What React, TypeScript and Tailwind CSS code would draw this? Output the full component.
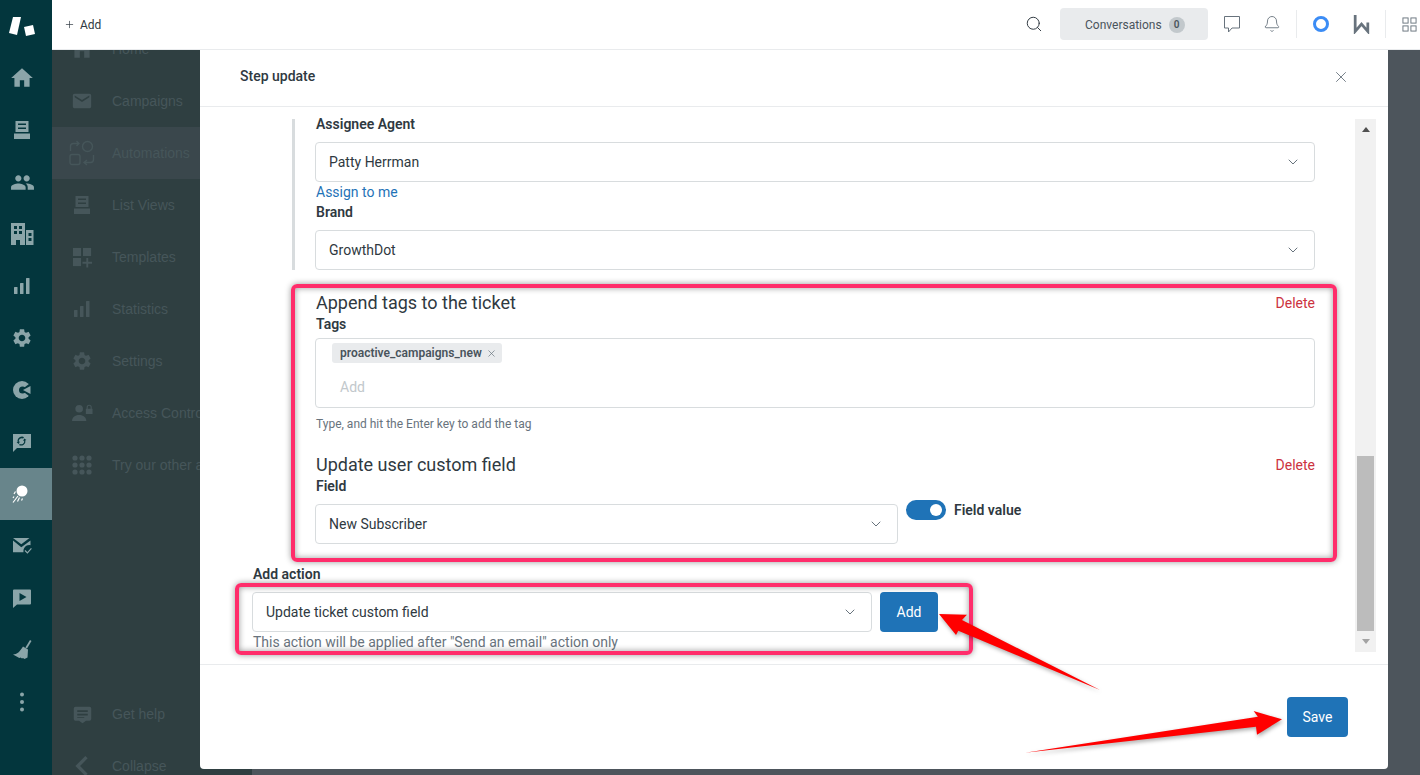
import { ChevronDown, Plus, Search, X, Bell } from 'lucide-react';
import { ReactNode } from 'react';
import { MdHome, MdPeople, MdSettings, MdEmail, MdChevronLeft } from 'react-icons/md';

const Svg = ({ children, className }: { children: ReactNode; className?: string }) => (
  <svg viewBox="0 0 24 24" fill="currentColor" className={className ?? 'w-6 h-6'}>
    {children}
  </svg>
);

const Logo = () => (
  <svg viewBox="0 0 26 20" fill="white" className="w-[26px] h-[20px]">
    <path d="M4 1 L12 1 L8 19 L0 17 Z" />
    <path d="M15 11 L24 9 L26 18 L17 20 Z" />
  </svg>
);

const InboxIcon = () => (
  <svg viewBox="0 0 16 18" fill="currentColor" className="w-4 h-[18px]">
    <path fillRule="evenodd" d="M1.500 0h13v11h-13z M4 2.500v1.500h8V2.500z M4 6.500V8h8V6.500z" />
    <path d="M0 12.500h16V18H0z" />
  </svg>
);

const BuildingIcon = () => (
  <Svg>
    <path
      fillRule="evenodd"
      d="M1 1h14v22H10v-5H6v5H1z M4 4v3h3V4z M9 4v3h3V4z M4 9v3h3V9z M9 9v3h3V9z M16 8h7.500v15H16z M18.500 11v3h3v-3z M18.500 16v3h3v-3z"
    />
  </Svg>
);

const BarsIcon = () => (
  <svg viewBox="0 0 16 16" fill="currentColor" className="w-4 h-4">
    <rect x="0" y="9" width="3.500" height="7" rx="0.5" />
    <rect x="6" y="5" width="3.500" height="11" rx="0.5" />
    <rect x="12" y="0" width="3.500" height="16" rx="0.5" />
  </svg>
);

const GaugeIcon = () => (
  <svg viewBox="0 0 18 18" fill="currentColor" className="h-[18px] w-[18px]">
    <circle cx="9" cy="9" r="9" />
    <circle cx="9.500" cy="9" r="3.500" fill="#03363d" />
    <polygon points="8,9 18.500,1 18.500,17" fill="#03363d" />
    <polygon points="10,9 17.500,5 17.500,13" />
  </svg>
);

const ChatSyncIcon = () => (
  <Svg>
    <path
      fillRule="evenodd"
      d="M3 4h18v14H7l-4 4z M12 6.500a4.500 4.500 0 0 0-4.400 5.500l-1 .3 2.200 1.700 1-2.600-1 .3a3 3 0 0 1 4.300-3.200l.9-1.200a4.500 4.500 0 0 0-2-.8z M16.400 10l-2.200-1.600-1 2.500 1-.2a3 3 0 0 1-4.300 3.200l-.9 1.200a4.500 4.500 0 0 0 6.400-4.800z"
    />
  </Svg>
);

const CometIcon = () => (
  <svg viewBox="0 0 24 24" fill="white" stroke="white" className="w-6 h-6">
    <circle cx="12" cy="9" r="5.500" stroke="none" />
    <path d="M5.500 9.500 4 12M8 14 3 20.500M9.500 15.500 7.500 19.500M12.500 16.500 11.500 18.500M4 14.500 3 16" strokeWidth="1.200" fill="none" />
  </svg>
);

const MailCheckIcon = () => (
  <Svg>
    <path d="M3 4h16.500l-8.200 6.200L3 4z" />
    <path d="M3 6.500v11.700h10.500a6 6 0 0 1 7-7V6.500l-9.200 6.700z" />
    <path d="M15 16.500l2.400 2.400 4-4.600" fill="none" stroke="currentColor" strokeWidth="1.200" />
  </Svg>
);

const VideoChatIcon = () => (
  <Svg>
    <path
      fillRule="evenodd"
      d="M4 3.500h16a1 1 0 0 1 1 1v13a1 1 0 0 1-1 1H7L3 22V4.500a1 1 0 0 1 1-1z M9.500 7v8l7-4z"
    />
  </Svg>
);

const BroomIcon = () => (
  <Svg>
    <path d="M20 2l1.500 1-4.500 7.500-1.600-1z" />
    <path d="M13 8.500l5 3-.5 8-3 1.500-1.500-1-1 .6-1.500-1-1.200.5L3 16.500c4 0 7-3 10-8z" />
  </Svg>
);

const DotsIcon = () => (
  <svg viewBox="0 0 24 24" fill="currentColor" className="w-6 h-6">
    <circle cx="12" cy="4.500" r="2" />
    <circle cx="12" cy="12" r="2" />
    <circle cx="12" cy="19.500" r="2" />
  </svg>
);

const AutomationIcon = () => (
  <svg viewBox="0 0 26 26" fill="none" stroke="currentColor" strokeWidth="1.400" className="w-[26px] h-[26px]">
    <circle cx="18.500" cy="6.500" r="5" />
    <rect x="1" y="14.500" width="10" height="10" rx="2" />
    <path d="M1.500 11V6.500a3 3 0 0 1 3-3H10M7.500 1 10 3.500 7.500 6" />
    <path d="M24.500 15v4.500a3 3 0 0 1-3 3H15M18 20l-3 2.500 3 2.500" />
  </svg>
);

const TemplatesIcon = () => (
  <svg viewBox="0 0 22 22" fill="currentColor" className="w-[21px] h-[21px]">
    <rect x="1" y="1" width="8.500" height="8.500" />
    <rect x="11.500" y="1" width="8.500" height="8.500" />
    <rect x="1" y="11.500" width="8.500" height="8.500" />
    <path d="M15 11.500h2v4h4v2h-4v4h-2v-4h-4v-2h4z" />
  </svg>
);

const AccessIcon = () => (
  <svg viewBox="0 0 22 18" fill="currentColor" className="w-[21px] h-[18px]">
    <circle cx="7.500" cy="4.500" r="4" />
    <path d="M0 17.500c0-4 3-6.500 7.500-6.500s7.500 2.500 7.500 6.500z" />
    <path fillRule="evenodd" d="M14.500 4.500h.8V3a2.700 2.700 0 0 1 5.400 0v1.500h.8V10h-7z M16.500 4.500h3V3a1.500 1.500 0 0 0-3 0z" />
  </svg>
);

const AppsIcon = () => (
  <svg viewBox="0 0 20 20" fill="currentColor" className="w-5 h-5">
    {[3, 10, 17].flatMap((cy) =>
      [3, 10, 17].map((cx) => <circle key={`${cx}-${cy}`} cx={cx} cy={cy} r="2.600" />)
    )}
  </svg>
);

const HelpIcon = () => (
  <svg viewBox="0 0 24 24" fill="currentColor" className="h-[21px] w-[21px]">
    <path
      fillRule="evenodd"
      d="M4 3h16a2 2 0 0 1 2 2v12a2 2 0 0 1-2 2h-4l-4 3-4-3H4a2 2 0 0 1-2-2V5a2 2 0 0 1 2-2z M6 7v2h12V7z M6 11v2h12v-2z M6 15v1h8v-1z"
    />
  </svg>
);

const GridIcon = () => (
  <svg viewBox="0 0 16 16" fill="none" stroke="currentColor" className="w-[15px] h-[15px]">
    <rect x="1" y="1" width="5.500" height="5.500" />
    <rect x="9.500" y="1" width="5.500" height="5.500" />
    <rect x="1" y="9.500" width="5.500" height="5.500" />
    <rect x="9.500" y="9.500" width="5.500" height="5.500" />
  </svg>
);

const BubbleIcon = () => (
  <svg viewBox="0 0 18 18" fill="none" stroke="currentColor" strokeWidth="1" className="h-[18px] w-[18px]">
    <path d="M1.500 1.500h15v11.500H9l-3.500 4v-4h-4z" />
  </svg>
);

const rail = [
  { icon: <MdHome className="h-[26px] w-[26px]" /> },
  { icon: <InboxIcon /> },
  { icon: <MdPeople className="h-[25px] w-[25px]" /> },
  { icon: <BuildingIcon /> },
  { icon: <BarsIcon /> },
  { icon: <MdSettings className="h-[22px] w-[22px]" /> },
  { icon: <GaugeIcon /> },
  { icon: <ChatSyncIcon /> },
  { icon: <CometIcon />, active: true },
  { icon: <MailCheckIcon /> },
  { icon: <VideoChatIcon /> },
  { icon: <BroomIcon /> },
  { icon: <DotsIcon /> },
];

const navTop = [
  { label: 'Home', icon: <MdHome className="h-[26px] w-[26px]" /> },
  { label: 'Campaigns', icon: <MdEmail className="h-[22px] w-[22px]" /> },
  { label: 'Automations', icon: <AutomationIcon />, active: true },
  { label: 'List Views', icon: <InboxIcon /> },
  { label: 'Templates', icon: <TemplatesIcon /> },
  { label: 'Statistics', icon: <BarsIcon /> },
  { label: 'Settings', icon: <MdSettings className="h-[22px] w-[22px]" /> },
  { label: 'Access Control', icon: <AccessIcon /> },
  { label: 'Try our other apps', icon: <AppsIcon /> },
];

function NavRow({ label, icon, active }: { label: string; icon: ReactNode; active?: boolean }) {
  return (
    <div className={`flex h-[52px] shrink-0 items-center whitespace-nowrap ${active ? 'bg-[#3a474c]' : ''}`}>
      <div className="flex w-[60px] justify-center text-[#46565a]">{icon}</div>
      <span className="text-[14px] text-[#46565a] font-['Liberation_Sans',sans-serif]">{label}</span>
    </div>
  );
}

function Select({ value, className }: { value: string; className?: string }) {
  return (
    <div
      className={`flex h-10 items-center justify-between rounded border border-[#d8dcde] bg-white pl-[13px] pr-[13px] text-[14px] text-[#2f3941] ${className ?? ''}`}
    >
      <span>{value}</span>
      <ChevronDown className="h-4 w-4 text-[#68737d]" strokeWidth={1.5} />
    </div>
  );
}

function Label({ children }: { children: ReactNode }) {
  return <div className="h-5 pl-px text-[14px] leading-5 font-semibold text-[#2f3941]">{children}</div>;
}

function ActionHead({ title }: { title: string }) {
  return (
    <div className="flex h-6 items-center justify-between pt-[2px]">
      <span className="pl-px text-[18px] leading-6 text-[#2f3941]">{title}</span>
      <span className="text-[14px] text-[#cc3340]">Delete</span>
    </div>
  );
}

export default function App() {
  return (
    <div className="relative flex h-[775px] w-[1420px] overflow-hidden bg-[#4d555c] font-['Roboto',sans-serif]">
      {/* rail */}
      <div className="flex w-[52px] shrink-0 flex-col bg-[#03363d] text-[#8ba5a9]">
        <div className="flex h-[52px] shrink-0 items-center justify-center pr-2">
          <Logo />
        </div>
        {rail.map((r, i) => (
          <div
            key={i}
            className={`flex h-[52px] shrink-0 items-center justify-center pr-2 ${r.active ? 'bg-[#68858b]' : ''}`}
          >
            {r.icon}
          </div>
        ))}
      </div>

      <div className="flex min-w-0 flex-1 flex-col">
        {/* top bar */}
        <div className="relative z-10 flex h-[50px] shrink-0 items-center border-b border-[#e9ebed] bg-white pb-px pl-[12px] pr-[3px]">
          <div className="flex items-center gap-[5px] pt-px text-[12px] text-[#2f3941]">
            <Plus className="h-[11px] w-[11px]" strokeWidth={1.5} />
            <span>Add</span>
          </div>
          <div className="ml-auto flex items-center">
            <Search className="h-[18px] w-[18px] text-[#2f3941]" strokeWidth={1.3} />
            <div className="ml-[17px] flex h-8 w-[148px] items-center rounded bg-[#e9ebed] pl-[25px] pt-px text-[12px] text-[#49545c]">
              Conversations
              <span className="ml-[7px] flex h-4 w-4 items-center justify-center rounded-full bg-[#c2c8cc] text-[10px] font-semibold">
                0
              </span>
            </div>
            <div className="ml-[15px] text-[#68737d]">
              <BubbleIcon />
            </div>
            <Bell className="ml-[22px] h-[18px] w-[18px] text-[#68737d]" strokeWidth={1.2} />
            <div className="ml-[15px] h-7 w-px bg-[#e9ebed]" />
            <div className="ml-4 h-4 w-4 rounded-full border-[3.5px] border-[#3b8cf5]" />
            <svg viewBox="0 0 16 19" fill="none" stroke="#68737d" strokeWidth="2.600" className="ml-6 h-5 w-[17px]">
              <path d="M2 1v15.500L8 9.500l6 7V8" />
            </svg>
            <div className="ml-[15px] h-7 w-px bg-[#e9ebed]" />
            <div className="ml-4 text-[#68737d]">
              <GridIcon />
            </div>
          </div>
        </div>

        {/* secondary nav behind the backdrop */}
        <div className="flex min-h-0 flex-1">
          <div className="flex w-[200px] shrink-0 flex-col bg-[#2f3f41] -mt-[27px] -mb-[17px]">
            {navTop.map((n) => (
              <NavRow key={n.label} {...n} />
            ))}
            <div className="flex-1" />
            <NavRow label="Get help" icon={<HelpIcon />} />
            <NavRow label="Collapse" icon={<MdChevronLeft className="h-10 w-10" />} />
          </div>
        </div>
      </div>

      {/* modal */}
      <div className="absolute left-[200px] top-[50px] flex h-[719px] w-[1188px] flex-col rounded-b bg-white">
        <div className="flex h-[57px] shrink-0 items-center justify-between border-b border-[#e9ebed] pb-[3px] pl-10 pr-[38px]">
          <span className="text-[14px] font-medium text-[#2f3941]">Step update</span>
          <X className="h-[18px] w-[18px] text-[#68737d]" strokeWidth={1.2} />
        </div>

        <div className="flex h-[557px] shrink-0 py-3 pr-3">
          <div className="min-w-0 flex-1">
            <div className="ml-[92px] flex w-[1023px] flex-col border-l-[3px] border-[#d8dcde] pl-5">
              <div className="-mt-[5px]">
                <Label>Assignee Agent</Label>
                <Select value="Patty Herrman" className="mt-2" />
                <div className="h-5 pl-px text-[14px] leading-5 text-[#1f73b7]">Assign to me</div>
                <Label>Brand</Label>
                <Select value="GrowthDot" className="mt-2" />
              </div>
            </div>

            <div className="ml-[115px] mt-5 w-[1000px]">
              <ActionHead title="Append tags to the ticket" />
              <Label>Tags</Label>
              <div className="mt-1 h-[70px] rounded border border-[#d8dcde] pl-4 pt-1">
                <div className="flex h-5 w-[170px] items-center justify-between rounded-[3px] bg-[#e9ebed] pl-[8px] pr-[5px] text-[12px] font-semibold text-[#49545c]">
                  proactive_campaigns_new
                  <X className="h-[11px] w-[11px] text-[#68737d]" strokeWidth={1.5} />
                </div>
                <div className="mt-[14px] pl-2 text-[14px] leading-5 text-[#c2c8cc]">Add</div>
              </div>
              <div className="mt-[6px] h-5 pl-px text-[12px] leading-5 text-[#68737d]">
                Type, and hit the Enter key to add the tag
              </div>
              <div className="mt-[18px]">
                <ActionHead title="Update user custom field" />
              </div>
              <Label>Field</Label>
              <div className="mt-2 flex items-start">
                <Select value="New Subscriber" className="w-[583px]" />
                <div className="-mt-1 ml-2 flex h-5 w-10 items-center justify-end rounded-full bg-[#1f73b7] pr-[4px]">
                  <div className="h-3 w-3 rounded-full bg-white" />
                </div>
                <div className="-mt-1 ml-2 h-5 text-[14px] leading-5 font-semibold text-[#2f3941]">Field value</div>
              </div>
            </div>

            <div className="ml-[52px] mt-5 w-[686px]">
              <Label>Add action</Label>
              <div className="mt-2 flex gap-2">
                <Select value="Update ticket custom field" className="w-[620px]" />
                <div className="flex h-10 w-[58px] items-center justify-center rounded bg-[#1f73b7] text-[14px] text-white">
                  Add
                </div>
              </div>
              <div className="h-5 pl-px text-[14px] leading-5 text-[#68737d]">
                This action will be applied after "Send an email" action only
              </div>
            </div>
          </div>

          {/* scrollbar */}
          <div className="flex w-[21px] shrink-0 flex-col items-center bg-[#f1f1f1]">
            <div className="flex h-[21px] shrink-0 items-center justify-center">
              <div className="h-0 w-0 border-x-[4px] border-b-[5px] border-x-transparent border-b-[#505050]" />
            </div>
            <div className="flex-1" />
            <div className="h-[175px] w-[17px] shrink-0 bg-[#bcbcbc]" />
            <div className="flex h-[21px] shrink-0 items-center justify-center">
              <div className="h-0 w-0 border-x-[4px] border-t-[5px] border-x-transparent border-t-[#a3a3a3]" />
            </div>
          </div>
        </div>

        <div className="flex flex-1 items-center justify-end border-t border-[#e9ebed] pr-10">
          <div className="flex h-10 w-[61px] items-center justify-center rounded bg-[#1f73b7] text-[14px] text-white">
            Save
          </div>
        </div>
      </div>

      {/* screenshot annotations */}
      <div className="absolute left-[291px] top-[284px] h-[278px] w-[1046px] rounded-[6px] border-4 border-[#ff2d6b] shadow-[0_0_6px_rgba(0,0,0,0.4),inset_0_0_6px_rgba(0,0,0,0.4)]" />
      <div className="absolute left-[235px] top-[583px] h-[72px] w-[738px] rounded-[6px] border-4 border-[#ff2d6b] shadow-[0_0_6px_rgba(0,0,0,0.4),inset_0_0_6px_rgba(0,0,0,0.4)]" />
      <svg
        viewBox="0 0 1420 775"
        className="pointer-events-none absolute inset-0 h-[775px] w-[1420px] drop-shadow-[1px_2px_2px_rgba(0,0,0,0.35)]"
      >
        <polygon points="939,614 967,614.700 962,620 1100,690 958.300,630.700 956,635" fill="#ff0000" />
        <polygon points="1025,752.700 1257.900,716.700 1253.600,711 1282,719.300 1257,734.700 1256,726.700" fill="#ff0000" />
      </svg>
    </div>
  );
}
